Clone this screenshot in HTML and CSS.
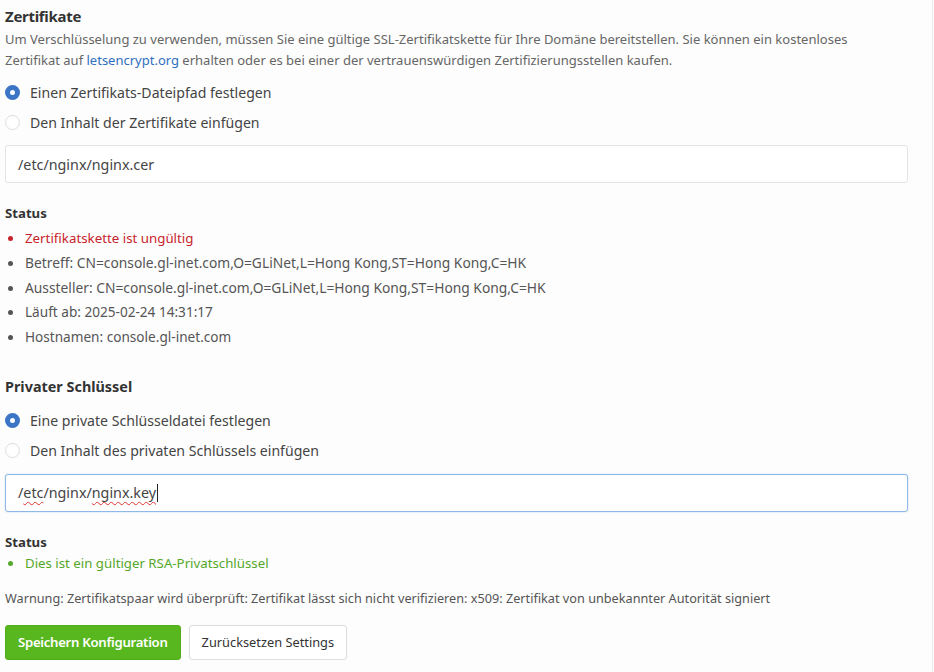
FILE: index.html
```html
<!DOCTYPE html>
<html lang="de">
<head>
<meta charset="utf-8">
<link rel="stylesheet" href="styles.css">
</head>
<body>
<div class="page">
  <h2 class="title">Zertifikate</h2>
  <p class="desc">Um Verschlüsselung zu verwenden, müssen Sie eine gültige SSL-Zertifikatskette für Ihre Domäne bereitstellen. Sie können ein kostenloses Zertifikat auf <a href="#">letsencrypt.org</a> erhalten oder es bei einer der vertrauenswürdigen Zertifizierungsstellen kaufen.</p>
  <div class="radios">
    <label class="radio"><span class="dot on"></span>Einen Zertifikats-Dateipfad festlegen</label>
    <label class="radio"><span class="dot"></span>Den Inhalt der Zertifikate einfügen</label>
  </div>
  <div class="input">/etc/nginx/nginx.cer</div>

  <h3 class="status">Status</h3>
  <ul class="list">
    <li class="err">Zertifikatskette ist ungültig</li>
    <li class="wide">Betreff: CN=console.gl-inet.com,O=GLiNet,L=Hong Kong,ST=Hong Kong,C=HK</li>
    <li class="wide">Aussteller: CN=console.gl-inet.com,O=GLiNet,L=Hong Kong,ST=Hong Kong,C=HK</li>
    <li>Läuft ab: 2025-02-24 14:31:17</li>
    <li>Hostnamen: console.gl-inet.com</li>
  </ul>

  <h3 class="section">Privater Schlüssel</h3>
  <div class="radios">
    <label class="radio"><span class="dot on"></span>Eine private Schlüsseldatei festlegen</label>
    <label class="radio"><span class="dot"></span>Den Inhalt des privaten Schlüssels einfügen</label>
  </div>
  <div class="input focus">/<span class="sp">etc</span>/nginx/<span class="sp">nginx.key</span><span class="caret"></span></div>

  <h3 class="status">Status</h3>
  <ul class="list tight">
    <li class="ok">Dies ist ein gültiger RSA-Privatschlüssel</li>
  </ul>

  <p class="warn">Warnung: Zertifikatspaar wird überprüft: Zertifikat lässt sich nicht verifizieren: x509: Zertifikat von unbekannter Autorität signiert</p>

  <div class="buttons">
    <button class="btn primary">Speichern Konfiguration</button>
    <button class="btn">Zurücksetzen Settings</button>
  </div>
</div>
</body>
</html>
```
FILE: styles.css
```css
html, body {
  margin: 0;
  padding: 0;
  background: #fdfdfd;
}
body {
  font-family: "Noto Sans", "Open Sans", sans-serif;
  color: #555;
  font-size: 14px;
}
.page {
  width: 933px;
  height: 672px;
  box-sizing: border-box;
  border-right: 1px solid #ececec;
  padding: 4px 0 0 5px;
  overflow: hidden;
}
.title {
  margin: 0;
  font-size: 15px;
  font-weight: 700;
  letter-spacing: -0.3px;
  color: #333;
  line-height: 24px;
}
.desc {
  margin: 1px 0 0;
  font-size: 13px;
  line-height: 21px;
  color: #666;
  padding-right: 40px;
  width: 860px;
}
.desc a {
  color: #2f6fc0;
  text-decoration: none;
}
.radios {
  display: flex;
  flex-direction: column;
  margin-top: 6px;
}
.radio {
  display: flex;
  align-items: center;
  height: 30px;
  font-size: 14.1px;
  color: #444;
}
.dot {
  width: 15px;
  height: 15px;
  border-radius: 50%;
  border: 1px solid #ddd;
  background: #fff;
  box-sizing: border-box;
  margin-right: 10px;
  flex: none;
}
.dot.on {
  border: 5px solid #3c74c6;
  background: #fff;
}
.input {
  margin-top: 8px;
  width: 903px;
  height: 38px;
  box-sizing: border-box;
  border: 1px solid #e3e3e3;
  border-radius: 3px;
  background: #fff;
  padding: 0 12px;
  display: flex;
  align-items: center;
  font-size: 14.3px;
  color: #444;
  white-space: pre;
}
.input.focus {
  border-color: #8fb8e6;
  box-shadow: 0 0 2px rgba(80,140,220,0.35);
}
.sp {
  text-decoration: underline wavy #d33;
  text-decoration-thickness: 1px;
  text-underline-offset: 3px;
}
.caret {
  width: 1px;
  height: 18px;
  background: #222;
  margin-left: 1px;
}
.status {
  margin: 19px 0 0;
  font-size: 13.2px;
  font-weight: 700;
  color: #333;
  line-height: 22px;
}
.list {
  margin: 2px 0 0;
  padding: 0 0 0 20px;
  list-style: none;
}
.list.tight {
  margin-top: -2px;
}
.list li {
  position: relative;
  line-height: 24.8px;
  font-size: 13.6px;
  color: #555;
}
.list li.wide { font-size: 13.8px; }
.list li::before {
  content: "";
  position: absolute;
  left: -17px;
  top: 10px;
  width: 5px;
  height: 5px;
  border-radius: 50%;
  background: #555;
}
.list li.err { color: #c8232c; font-size: 13.3px; }
.list li.err::before { background: #c8232c; }
.list li.ok { color: #55a82a; font-size: 13.25px; }
.list li.ok::before { background: #55a82a; }
.section {
  margin: 25px 0 0;
  font-size: 14.4px;
  font-weight: 700;
  color: #333;
  line-height: 24px;
}
.section + .radios { margin-top: 7px; }
.warn {
  margin: 12px 0 0;
  font-size: 12.7px;
  color: #555;
  line-height: 20px;
}
.buttons {
  display: flex;
  gap: 8px;
  margin-top: 17px;
}
.btn {
  height: 35px;
  box-sizing: border-box;
  border-radius: 3px;
  font-family: inherit;
  font-size: 12.8px;
  padding: 0 12px;
  border: 1px solid #ddd;
  background: #fff;
  color: #333;
}
.btn.primary {
  background: #58b71e;
  border-color: #52ad1a;
  color: #fff;
  font-weight: 600;
  font-size: 13.2px;
  letter-spacing: -0.3px;
}
```
